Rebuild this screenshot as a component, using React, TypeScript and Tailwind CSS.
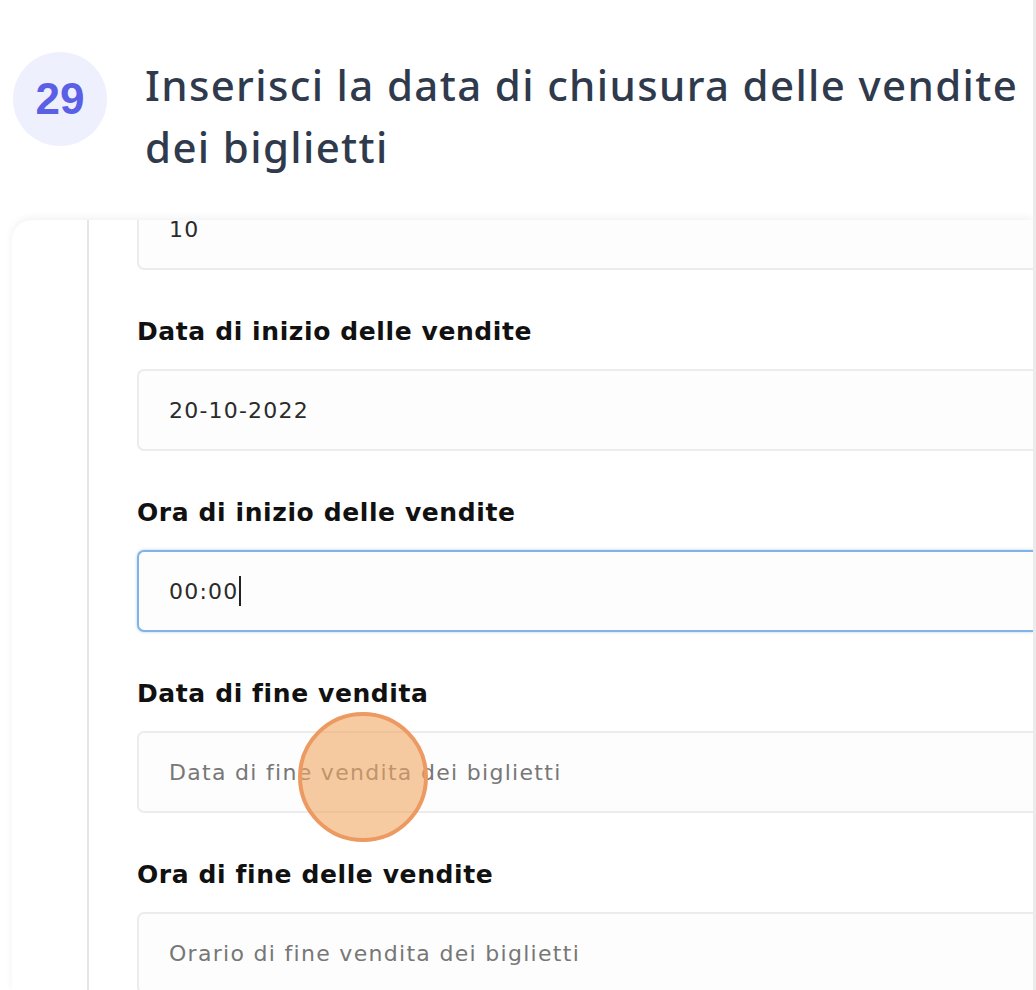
import React from 'react';

const formFont = { fontFamily: '"DejaVu Sans", "Open Sans", sans-serif' };

type FieldProps = {
  label?: string;
  value?: string;
  placeholder?: string;
  focused?: boolean;
};

const Field: React.FC<FieldProps> = ({ label, value, placeholder, focused }) => (
  <div className="flex flex-col">
    {label && (
      <div className="mt-[45px] mb-[20px] h-[34px] flex items-center text-[25px] font-bold tracking-[0.6px] text-[#111111]">
        {label}
      </div>
    )}
    <div
      className={
        'h-[82px] flex items-center pl-[30px] rounded-l-[7px] border-r-0 bg-[#fdfdfd] text-[22px] ' +
        (focused
          ? 'border-[2px] border-[#80b4e6] shadow-[0_0_3px_rgba(100,160,225,0.5)]'
          : 'border-[2px] border-[#ececec]')
      }
    >
      {value ? (
        <span className="text-[#2b2b2b] flex items-center tracking-[1.2px]">
          {value}
          {focused && <span className="ml-[1px] inline-block w-[2px] h-[30px] bg-[#222222]" />}
        </span>
      ) : (
        <span className="text-[#777777] tracking-[1.3px]">{placeholder}</span>
      )}
    </div>
  </div>
);

export default function App() {
  return (
    <div className="relative w-[1036px] h-[990px] overflow-hidden bg-white flex">
      <div className="flex-1 flex flex-col">
        <div className="flex pt-[52px] pl-[13px]">
          <div className="w-[94px] h-[94px] shrink-0 rounded-full bg-[#eef0fd] flex items-center justify-center">
            <span
              className="text-[44px] font-bold text-[#5b5fe6] leading-none"
              style={{ fontFamily: '"Liberation Sans", Arial, sans-serif' }}
            >
              29
            </span>
          </div>
          <h1
            className="ml-[38px] mt-[2px] text-[42px] leading-[62px] tracking-[1.35px] text-[#2f3a4c] font-medium whitespace-nowrap"
            style={{ fontFamily: '"Noto Sans", "Open Sans", sans-serif' }}
          >
            Inserisci la data di chiusura delle vendite
            <br />
            dei biglietti
          </h1>
        </div>

        <div className="mt-[42px] ml-[12px] flex-1 flex rounded-tl-[20px] bg-white shadow-[0_-2px_8px_rgba(0,0,0,0.06)] overflow-hidden" style={formFont}>
          <div className="w-[77px] shrink-0 border-r-[2px] border-[#e6e6e6]" />
          <div className="flex-1 pl-[48px] -mt-[32px]">
            <Field value="10" />
            <Field label="Data di inizio delle vendite" value="20-10-2022" />
            <Field label="Ora di inizio delle vendite" value="00:00" focused />
            <Field label="Data di fine vendita" placeholder="Data di fine vendita dei biglietti" />
            <Field label="Ora di fine delle vendite" placeholder="Orario di fine vendita dei biglietti" />
          </div>
        </div>
      </div>
      <div className="w-[3px] shrink-0 bg-[#ebebeb]" />

      <div className="absolute left-[298px] top-[712px] w-[130px] h-[130px] rounded-full border-[4px] border-[#ec9a62] bg-[rgba(240,168,98,0.6)]" />
    </div>
  );
}
